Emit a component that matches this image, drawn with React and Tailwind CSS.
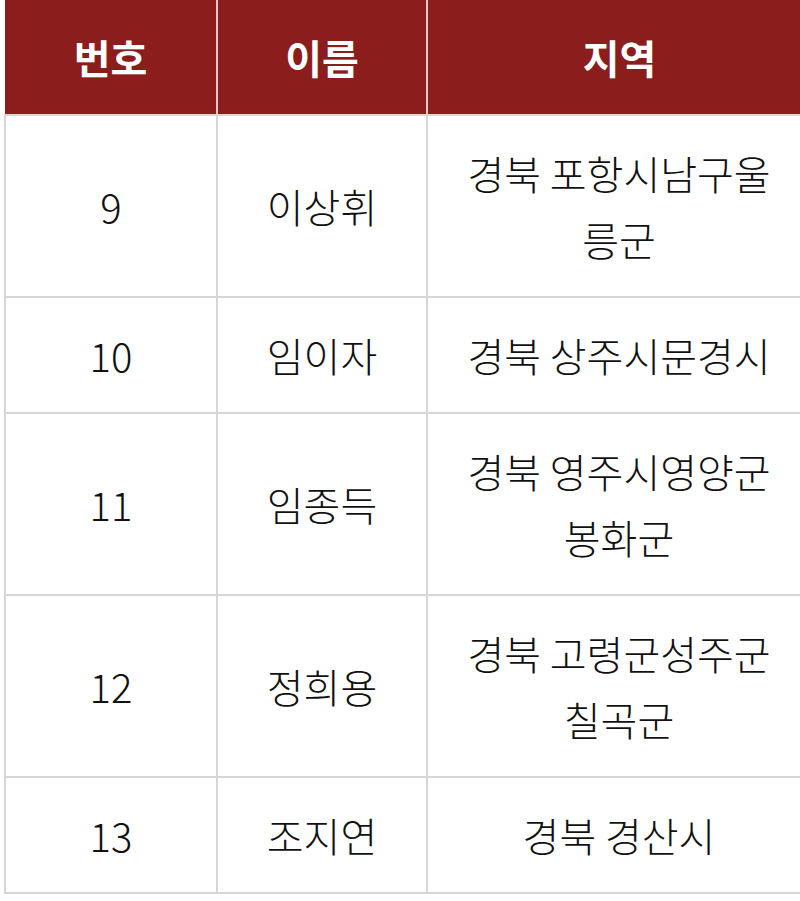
import React from "react";

const rows = [
  { no: "9", name: "이상휘", region: ["경북 포항시남구울", "릉군"] },
  { no: "10", name: "임이자", region: ["경북 상주시문경시"] },
  { no: "11", name: "임종득", region: ["경북 영주시영양군", "봉화군"] },
  { no: "12", name: "정희용", region: ["경북 고령군성주군", "칠곡군"] },
  { no: "13", name: "조지연", region: ["경북 경산시"] },
];

export default function App() {
  return (
    <div
      className="w-[800px] h-[901px] overflow-hidden bg-white"
      style={{ fontFamily: '"Noto Sans CJK KR", "Noto Sans", sans-serif' }}
    >
      <table className="ml-[4px] w-[806px] border-collapse table-fixed text-[40px] leading-[66px] text-[#111]">
        <colgroup>
          <col className="w-[212px]" />
          <col className="w-[210px]" />
          <col className="w-[384px]" />
        </colgroup>
        <thead>
          <tr className="bg-[#8b1d1d] text-white h-[115px]">
            <th className="font-bold border-r-2 border-b-2 border-r-[#f0c4c4] border-b-[#ecd0d0] text-center align-middle">번호</th>
            <th className="font-bold border-r-2 border-b-2 border-r-[#f0c4c4] border-b-[#ecd0d0] text-center align-middle">이름</th>
            <th className="font-bold border-b-2 border-b-[#ecd0d0] text-center align-middle">지역</th>
          </tr>
        </thead>
        <tbody>
          {rows.map((r) => (
            <tr key={r.no}>
              <td className="border-2 border-[#d6d6d6] text-center align-middle py-[24px] font-light">{r.no}</td>
              <td className="border-2 border-[#d6d6d6] text-center align-middle py-[24px] font-light">{r.name}</td>
              <td className="border-2 border-[#d6d6d6] text-center align-middle py-[24px] font-light">
                {r.region.map((l, i) => (
                  <div key={i}>{l}</div>
                ))}
              </td>
            </tr>
          ))}
        </tbody>
      </table>
    </div>
  );
}
